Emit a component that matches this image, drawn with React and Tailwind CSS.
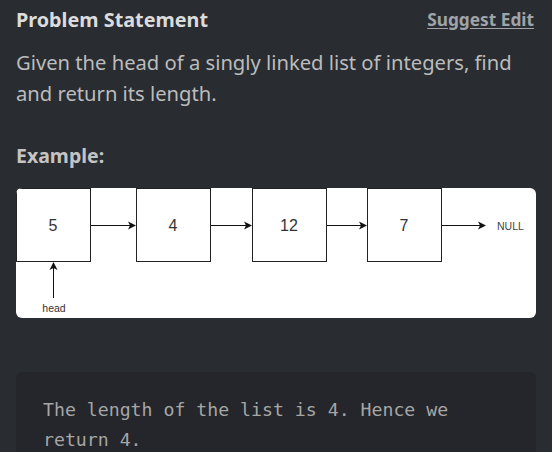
import React from 'react';

function ListDiagram() {
  const boxes = [
    { x: 0, val: '5' },
    { x: 120, val: '4' },
    { x: 236, val: '12' },
    { x: 351, val: '7' },
  ];
  const arrows = [
    [74, 120],
    [194, 236],
    [310, 351],
    [425, 470],
  ];
  return (
    <svg width="518" height="130" viewBox="0 0 518 130" className="block">
      {boxes.map((b) => (
        <g key={b.x}>
          <rect x={b.x + 0.5} y="0.5" width="74" height="73" fill="#fff" stroke="#222" strokeWidth="1" />
          <text
            x={b.x + 37}
            y="43"
            textAnchor="middle"
            fontFamily="Liberation Sans, Arial, sans-serif"
            fontSize="16"
            fill="#333"
          >
            {b.val}
          </text>
        </g>
      ))}
      {arrows.map(([a, b]) => (
        <g key={a}>
          <line x1={a + 1} y1="37.5" x2={b - 6} y2="37.5" stroke="#111" strokeWidth="1" />
          <path d={`M${b} 37.5 L${b - 8} 33.5 L${b - 6} 37.5 L${b - 8} 41.5 Z`} fill="#111" />
        </g>
      ))}
      <text x="481" y="41.5" fontFamily="Liberation Sans, Arial, sans-serif" fontSize="10.5" fill="#444">
        NULL
      </text>
      <line x1="37.5" y1="110" x2="37.5" y2="80" stroke="#111" strokeWidth="1" />
      <path d="M37.5 74 L33.5 82 L37.5 80 L41.5 82 Z" fill="#111" />
      <text
        x="38"
        y="124"
        textAnchor="middle"
        fontFamily="Liberation Sans, Arial, sans-serif"
        fontSize="10.5"
        fill="#333"
      >
        head
      </text>
    </svg>
  );
}

export default function App() {
  return (
    <div className="h-[452px] w-[552px] overflow-hidden bg-[#292c31] px-4 pt-[6px]" style={{ fontFamily: '"Noto Sans", Lato, sans-serif' }}>
      <div className="flex items-center justify-between">
        <h2 className="text-[19.8px] font-bold leading-[28px] text-[#dcdcdc]">Problem Statement</h2>
        <a href="#" className="mr-[2px] text-[17.3px] font-bold leading-[28px] text-[#a0a4a8] underline underline-offset-2">
          Suggest Edit
        </a>
      </div>
      <p className="mt-[13px] text-[20.2px] leading-[31px] text-[#bcbcbc]">
        Given the head of a singly linked list of integers, find and return its length.
      </p>
      <h3 className="mt-[32px] text-[19.5px] font-bold leading-[30px] text-[#c4c4c4]">Example:</h3>
      <div className="mt-[17px] overflow-hidden rounded-[6px] bg-white">
        <ListDiagram />
      </div>
      <div className="mt-[54px] rounded-[6px] bg-[#24262b] px-[27px] pt-[23px] pb-4">
        <p
          className="text-[18.2px] leading-[30px] text-[#a6a6a6]"
          style={{ fontFamily: '"DejaVu Sans Mono", "Liberation Mono", monospace' }}
        >
          The length of the list is 4. Hence we
          <br />
          return 4.
        </p>
      </div>
    </div>
  );
}
